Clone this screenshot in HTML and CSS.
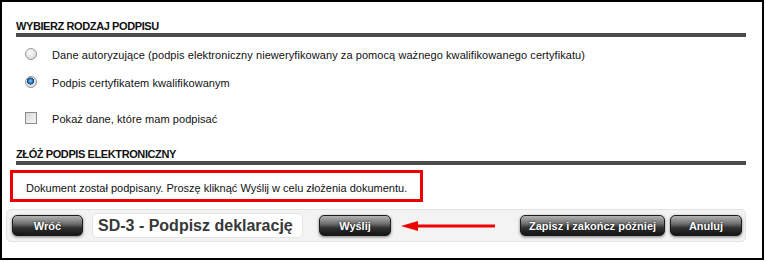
FILE: index.html
```html
<!DOCTYPE html>
<html lang="pl">
<head>
  <meta charset="UTF-8">
  <title>Podpis deklaracji</title>
  <link rel="stylesheet" href="styles.css">
</head>
<body>
  <div class="frame">
    <h2 class="section-title first">WYBIERZ RODZAJ PODPISU</h2>

    <div class="options">
      <label class="option">
        <span class="radio"></span>
        Dane autoryzujące (podpis elektroniczny nieweryfikowany za pomocą ważnego kwalifikowanego certyfikatu)
      </label>
      <label class="option second">
        <span class="radio checked"></span>
        Podpis certyfikatem kwalifikowanym
      </label>
      <label class="option check-row">
        <span class="checkbox"></span>
        Pokaż dane, które mam podpisać
      </label>
    </div>

    <h2 class="section-title">ZŁÓŻ PODPIS ELEKTRONICZNY</h2>

    <div class="notice">Dokument został podpisany. Proszę kliknąć Wyślij w celu złożenia dokumentu.</div>

    <div class="toolbar">
      <button class="btn btn-back">Wróć</button>
      <div class="page-name">SD-3 - Podpisz deklarację</div>
      <button class="btn btn-send">Wyślij</button>
      <svg class="arrow" width="94" height="12" viewBox="0 0 94 12">
        <rect x="14" y="4.5" width="80" height="3" fill="#ee0000"/>
        <polygon points="0,6 17,1 17,11" fill="#ee0000"/>
      </svg>
      <button class="btn btn-save">Zapisz i zakończ później</button>
      <button class="btn btn-cancel">Anuluj</button>
    </div>
  </div>
</body>
</html>
```

FILE: styles.css
```css
* {
  box-sizing: border-box;
}

body {
  margin: 0;
  background: #fff;
  font-family: "Liberation Sans", Arial, sans-serif;
  font-size: 11px;
  color: #111;
}

.frame {
  width: 764px;
  height: 260px;
  border: 2px solid #000;
  background: #fff;
}

.section-title {
  margin: 0 16px 0 14px;
  font-size: 11px;
  line-height: 13px;
  font-weight: bold;
  letter-spacing: -0.4px;
  color: #111;
  border-bottom: 4px solid #4a4a4a;
}

.section-title.first {
  margin-top: 18px;
}

.options {
  margin: 11px 0 22px 23px;
  letter-spacing: 0.07px;
}

.option {
  display: flex;
  align-items: center;
  height: 14px;
  line-height: 14px;
}

.option.second {
  margin-top: 14px;
}

.option.check-row {
  margin-top: 22px;
}

.radio,
.checkbox {
  width: 12px;
  height: 12px;
  margin-right: 15px;
  flex-shrink: 0;
}

.radio {
  border-radius: 50%;
  border: 1px solid #9a9a9a;
  background: radial-gradient(circle at 40% 35%, #fdfdfd 0%, #e4e4e4 55%, #c8c8c8 100%);
  margin-top: -2px;
}

.radio.checked {
  background:
    radial-gradient(circle at 45% 40%, #8fd0f5 0%, #2a7fc0 25%, #0d3f78 42%, transparent 46%),
    radial-gradient(circle at 40% 35%, #fdfdfd 0%, #e4e4e4 55%, #c8c8c8 100%);
}

.checkbox {
  border: 1px solid #8c8c8c;
  background: linear-gradient(135deg, #d8d8d8, #f6f6f6);
  margin-top: -3px;
}

.notice {
  margin: 5px 0 0 8px;
  width: 413px;
  height: 32px;
  border: 3px solid #ee0000;
  padding: 9px 0 0 13px;
  line-height: 13px;
  color: #111;
}

.toolbar {
  display: flex;
  align-items: center;
  margin: 7px 0 0 4px;
  width: 740px;
  height: 33px;
  padding: 0 3px 0 5px;
  border: 1px solid #e2e2e2;
  border-radius: 5px;
  background: #f3f3f3;
}

.btn {
  height: 21px;
  padding: 0;
  border: 1px solid #1c1c1c;
  border-radius: 5px;
  background: linear-gradient(#b4b4b4, #707070 40%, #323232 62%, #141414);
  box-shadow: 0 1px 3px rgba(0, 0, 0, 0.5);
  color: #fff;
  font-family: "Liberation Sans", Arial, sans-serif;
  font-size: 11px;
  font-weight: bold;
  text-shadow: 0 0 2px #000;
  white-space: nowrap;
}

.btn-back {
  width: 71px;
}

.page-name {
  margin-left: 9px;
  width: 211px;
  height: 25px;
  line-height: 23px;
  padding-left: 5px;
  border: 1px solid #e4e4e4;
  border-radius: 5px;
  background: #fff;
  font-size: 16px;
  font-weight: bold;
  color: #383838;
  white-space: nowrap;
  overflow: hidden;
}

.btn-send {
  margin-left: 16px;
  width: 72px;
}

.arrow {
  margin-left: 10px;
  display: block;
}

.btn-save {
  margin-left: auto;
  width: 145px;
}

.btn-cancel {
  margin-left: 5px;
  width: 72px;
}
```
